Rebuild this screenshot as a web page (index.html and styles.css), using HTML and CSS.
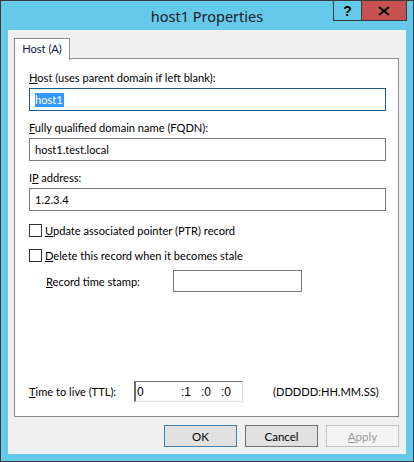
FILE: index.html
```html
<!DOCTYPE html>
<html lang="en">
<head>
    <meta charset="UTF-8">
    <title>host1 Properties</title>
    <link rel="stylesheet" href="styles.css">
</head>
<body>
    <div class="window">
        <header class="titlebar">
            <div></div>
            <div class="title">host1 Properties</div>
            <div class="caption-btns">
                <div class="cap-btn help">?</div>
                <div class="cap-btn close">
                    <svg width="12" height="10" viewBox="0 0 12 10">
                        <path d="M1 1 L11 9 M11 1 L1 9" stroke="#000" stroke-width="2.2" fill="none"/>
                    </svg>
                </div>
            </div>
        </header>

        <div class="client">
            <div class="tabs">
                <div class="tab active">Host (A)</div>
            </div>
            <div class="panel">
                <div class="group">
                    <label><u>H</u>ost (uses parent domain if left blank):</label>
                    <div class="field focused"><span class="sel">host1</span></div>
                </div>
                <div class="group">
                    <label><u>F</u>ully qualified domain name (FQDN):</label>
                    <div class="field">host1.test.local</div>
                </div>
                <div class="group">
                    <label>I<u>P</u> address:</label>
                    <div class="field">1.2.3.4</div>
                </div>

                <div class="check first">
                    <span class="box"></span>
                    <span><u>U</u>pdate associated pointer (PTR) record</span>
                </div>
                <div class="check">
                    <span class="box"></span>
                    <span><u>D</u>elete this record when it becomes stale</span>
                </div>
                <div class="stamp-row">
                    <span class="stamp-label"><u>R</u>ecord time stamp:</span>
                    <div class="stamp-box"></div>
                </div>

                <div class="ttl-row">
                    <span class="ttl-label"><u>T</u>ime to live (TTL):</span>
                    <div class="ttl-field">
                        <span class="days">0</span>
                        <span class="part">:1</span>
                        <span class="part">:0</span>
                        <span class="part">:0</span>
                    </div>
                    <span class="ttl-format">(DDDDD:HH.MM.SS)</span>
                </div>
            </div>

            <div class="buttons">
                <button class="btn default">OK</button>
                <button class="btn">Cancel</button>
                <button class="btn disabled"><u>A</u>pply</button>
            </div>
        </div>
    </div>
</body>
</html>
```

FILE: styles.css
```css
body {
    margin: 0;
    padding: 0;
    font-family: 'Lato', sans-serif;
    font-size: 11.1px;
    color: #000;
}
.window {
    width: 414px;
    height: 462px;
    box-sizing: border-box;
    border: 1px solid #3a3a3a;
    background: #65c9e9;
    padding: 0 7px 7px 7px;
    display: flex;
    flex-direction: column;
}
.titlebar {
    height: 29px;
    display: grid;
    grid-template-columns: 1fr auto 1fr;
    align-items: start;
}
.title {
    font-family: 'Noto Sans', sans-serif;
    font-size: 14.5px;
    line-height: 30px;
    color: #1a1a1a;
}
.caption-btns {
    display: flex;
    justify-content: flex-end;
    margin-top: -1px;
    margin-right: -1px;
}
.cap-btn {
    height: 21px;
    box-sizing: border-box;
    border: 1px solid #3a3a3a;
    display: flex;
    align-items: center;
    justify-content: center;
}
.help {
    width: 29px;
    font-weight: bold;
    font-size: 14px;
    font-family: 'Liberation Sans', sans-serif;
}
.close {
    width: 46px;
    margin-left: -1px;
    background: #c75050;
}
.client {
    flex: 1;
    background: #f0f0f0;
    padding: 8px 7px 7px 6px;
    display: flex;
    flex-direction: column;
}
.tabs {
    display: flex;
    height: 20px;
}
.tab {
    border: 1px solid #898c95;
    border-bottom: none;
    background: #fff;
    width: 54px;
    text-align: center;
    line-height: 19px;
    height: 21px;
    position: relative;
    z-index: 1;
    color: #0b1a3c;
}
.panel {
    flex: 1;
    background: #fff;
    border: 1px solid #898c95;
    padding: 11px 12px 14px 14px;
    display: flex;
    flex-direction: column;
}
.group {
    display: flex;
    flex-direction: column;
    margin-bottom: 9px;
}
.group label {
    line-height: 15px;
    margin-bottom: 3px;
}
.field {
    height: 23px;
    box-sizing: border-box;
    border: 1px solid #7a7a7a;
    padding: 0 5px;
    line-height: 21px;
}
.field.focused {
    border-color: #1e5a8c;
}
.sel {
    background: #3399ff;
    color: #fff;
    padding: 0 1px 1px 0;
}
.check {
    display: flex;
    align-items: center;
    line-height: 15px;
    margin-bottom: 10px;
}
.check.first {
    margin-top: 3px;
}
.box {
    width: 13px;
    height: 13px;
    box-sizing: border-box;
    border: 1px solid #333;
    background: #fff;
    margin-right: 3px;
}
.stamp-row {
    display: flex;
    align-items: center;
    margin-left: 17px;
    margin-top: -3px;
}
.stamp-label {
    width: 127px;
}
.stamp-box {
    width: 129px;
    height: 22px;
    box-sizing: border-box;
    border: 1px solid #7a7a7a;
}
.ttl-row {
    margin-top: auto;
    display: flex;
    align-items: center;
}
.ttl-label {
    width: 105px;
}
.ttl-field {
    width: 109px;
    height: 21px;
    box-sizing: border-box;
    border-top: 1px solid #6d6d6d;
    border-left: 2px solid #6d6d6d;
    border-right: 1px solid #dcdcdc;
    border-bottom: 1px solid #dcdcdc;
    display: flex;
    align-items: center;
    font-family: 'Liberation Sans', sans-serif;
    font-size: 12px;
}
.days {
    width: 44px;
    padding-left: 1px;
}
.part {
    width: 20px;
}
.ttl-format {
    margin-left: 30px;
}
.buttons {
    display: flex;
    justify-content: flex-end;
    gap: 8px;
    margin-top: 8px;
}
.btn {
    width: 73px;
    height: 22px;
    font-family: 'Lato', sans-serif;
    font-size: 11.5px;
    background: #e1e1e1;
    border: 1px solid #707070;
    padding: 0;
    color: #000;
}
.btn.default {
    border-color: #3c7fb1;
}
.btn.disabled {
    background: #f4f4f4;
    border-color: #c4c4c4;
    color: #9a9a9a;
}
```
